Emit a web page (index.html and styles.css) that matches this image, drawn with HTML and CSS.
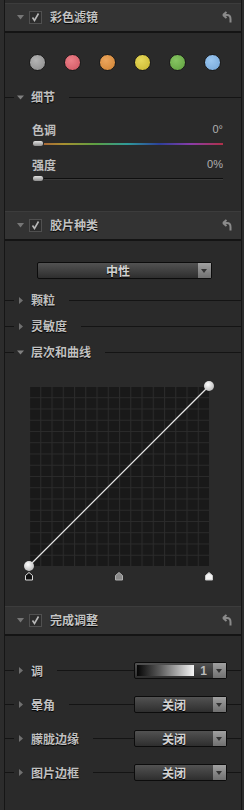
FILE: index.html
```html
<!DOCTYPE html>
<html lang="zh-CN">
<head>
    <meta charset="UTF-8">
    <title>调整面板</title>
    <link rel="stylesheet" href="styles.css">
</head>
<body>
    <div class="panel">
        <!-- 彩色滤镜 -->
        <div class="header">
            <svg class="tri" width="7" height="5" viewBox="0 0 7 5"><polygon points="0,0 7,0 3.5,4.5" fill="#767676"/></svg>
            <span class="check"><svg width="11" height="11" viewBox="0 0 11 11"><path d="M2.5 5.5 L4.5 8.5 L8.5 1.5" fill="none" stroke="#b8b8b8" stroke-width="1.6"/></svg></span>
            <span class="title">彩色滤镜</span>
            <svg class="undo" width="10" height="12" viewBox="0 0 10 12"><path d="M1 4 L4.5 1 M1 4 L4.5 7 M1.5 4 H5 C7.5 4 8.5 6 8.5 8 V11.5" fill="none" stroke="#8a8a8a" stroke-width="2"/></svg>
        </div>
        <div class="section s1">
            <div class="swatches">
                <span class="dot gray"></span>
                <span class="dot red"></span>
                <span class="dot orange"></span>
                <span class="dot yellow"></span>
                <span class="dot green"></span>
                <span class="dot blue"></span>
            </div>
            <div class="sub first-sub">
                <span class="lead"></span>
                <svg class="arrow" width="7" height="7" viewBox="0 0 7 7"><polygon points="0,1.5 7,1.5 3.5,5.5" fill="#808080"/></svg>
                <span class="label">细节</span>
                <span class="rule"></span>
            </div>
            <div class="slider">
                <div class="slider-head"><span>色调</span><span class="val">0°</span></div>
                <div class="track hue"><span class="thumb"></span></div>
            </div>
            <div class="slider">
                <div class="slider-head"><span>强度</span><span class="val">0%</span></div>
                <div class="track plain"><span class="thumb"></span></div>
            </div>
        </div>

        <!-- 胶片种类 -->
        <div class="header">
            <svg class="tri" width="7" height="5" viewBox="0 0 7 5"><polygon points="0,0 7,0 3.5,4.5" fill="#767676"/></svg>
            <span class="check"><svg width="11" height="11" viewBox="0 0 11 11"><path d="M2.5 5.5 L4.5 8.5 L8.5 1.5" fill="none" stroke="#b8b8b8" stroke-width="1.6"/></svg></span>
            <span class="title">胶片种类</span>
            <svg class="undo" width="10" height="12" viewBox="0 0 10 12"><path d="M1 4 L4.5 1 M1 4 L4.5 7 M1.5 4 H5 C7.5 4 8.5 6 8.5 8 V11.5" fill="none" stroke="#8a8a8a" stroke-width="2"/></svg>
        </div>
        <div class="section s2">
            <div class="select wide">
                <span class="select-text">中性</span>
                <span class="select-btn"></span>
            </div>
            <div class="sub grain">
                <span class="lead"></span>
                <svg class="arrow" width="7" height="7" viewBox="0 0 7 7"><polygon points="2,0 6,3.5 2,7" fill="#707070"/></svg>
                <span class="label">颗粒</span>
                <span class="rule"></span>
            </div>
            <div class="sub">
                <span class="lead"></span>
                <svg class="arrow" width="7" height="7" viewBox="0 0 7 7"><polygon points="2,0 6,3.5 2,7" fill="#707070"/></svg>
                <span class="label">灵敏度</span>
                <span class="rule"></span>
            </div>
            <div class="sub">
                <span class="lead"></span>
                <svg class="arrow" width="7" height="7" viewBox="0 0 7 7"><polygon points="0,1.5 7,1.5 3.5,5.5" fill="#808080"/></svg>
                <span class="label">层次和曲线</span>
                <span class="rule"></span>
            </div>
            <svg class="curve" width="192" height="202" viewBox="0 0 192 202">
                <defs>
                    <pattern id="grid" x="6" y="6" width="11.25" height="11.25" patternUnits="userSpaceOnUse">
                        <rect width="11.25" height="11.25" fill="#191919"/>
                        <path d="M0 0.5 H11.25 M0.5 0 V11.25" stroke="#2b2b2b" stroke-width="1"/>
                    </pattern>
                    <radialGradient id="knob" cx="0.4" cy="0.35" r="0.7">
                        <stop offset="0" stop-color="#ffffff"/>
                        <stop offset="1" stop-color="#b8b8b8"/>
                    </radialGradient>
                </defs>
                <rect x="6" y="6" width="180" height="180" fill="url(#grid)"/>
                <line x1="6" y1="186" x2="186" y2="6" stroke="#e6e6e6" stroke-width="1.2"/>
                <circle cx="6" cy="186" r="5" fill="url(#knob)"/>
                <circle cx="186" cy="6" r="5" fill="url(#knob)"/>
                <polygon points="2.5,200 2.5,195.5 6,192.5 9.5,195.5 9.5,200" fill="#111" stroke="#dcdcdc" stroke-width="1"/>
                <polygon points="92.5,200 92.5,195.5 96,192.5 99.5,195.5 99.5,200" fill="#8a8a8a" stroke="#b0b0b0" stroke-width="1"/>
                <polygon points="182.5,200 182.5,195.5 186,192.5 189.5,195.5 189.5,200" fill="#f2f2f2" stroke="#c8c8c8" stroke-width="1"/>
            </svg>
        </div>

        <!-- 完成调整 -->
        <div class="header">
            <svg class="tri" width="7" height="5" viewBox="0 0 7 5"><polygon points="0,0 7,0 3.5,4.5" fill="#767676"/></svg>
            <span class="check"><svg width="11" height="11" viewBox="0 0 11 11"><path d="M2.5 5.5 L4.5 8.5 L8.5 1.5" fill="none" stroke="#b8b8b8" stroke-width="1.6"/></svg></span>
            <span class="title">完成调整</span>
            <svg class="undo" width="10" height="12" viewBox="0 0 10 12"><path d="M1 4 L4.5 1 M1 4 L4.5 7 M1.5 4 H5 C7.5 4 8.5 6 8.5 8 V11.5" fill="none" stroke="#8a8a8a" stroke-width="2"/></svg>
        </div>
        <div class="section s3">
            <div class="row">
                <span class="lead"></span>
                <svg class="arrow" width="7" height="7" viewBox="0 0 7 7"><polygon points="2,0 6,3.5 2,7" fill="#707070"/></svg>
                <span class="label">调</span>
                <span class="rule"></span>
                <div class="select small">
                    <span class="ramp"></span>
                    <span class="num">1</span>
                    <span class="select-btn"></span>
                </div>
                <span class="tail"></span>
            </div>
            <div class="row">
                <span class="lead"></span>
                <svg class="arrow" width="7" height="7" viewBox="0 0 7 7"><polygon points="2,0 6,3.5 2,7" fill="#707070"/></svg>
                <span class="label">晕角</span>
                <span class="rule"></span>
                <div class="select small">
                    <span class="select-text">关闭</span>
                    <span class="select-btn"></span>
                </div>
                <span class="tail"></span>
            </div>
            <div class="row">
                <span class="lead"></span>
                <svg class="arrow" width="7" height="7" viewBox="0 0 7 7"><polygon points="2,0 6,3.5 2,7" fill="#707070"/></svg>
                <span class="label">朦胧边缘</span>
                <span class="rule"></span>
                <div class="select small">
                    <span class="select-text">关闭</span>
                    <span class="select-btn"></span>
                </div>
                <span class="tail"></span>
            </div>
            <div class="row">
                <span class="lead"></span>
                <svg class="arrow" width="7" height="7" viewBox="0 0 7 7"><polygon points="2,0 6,3.5 2,7" fill="#707070"/></svg>
                <span class="label">图片边框</span>
                <span class="rule"></span>
                <div class="select small">
                    <span class="select-text">关闭</span>
                    <span class="select-btn"></span>
                </div>
                <span class="tail"></span>
            </div>
        </div>
    </div>
</body>
</html>
```

FILE: styles.css
```css
body {
    margin: 0;
    padding: 0;
    background-color: #2c2c2c;
    font-family: "Noto Sans CJK SC", "Noto Sans", sans-serif;
    font-size: 12px;
    font-weight: bold;
    color: #c0c0c0;
}
.panel {
    margin-left: 4px;
    width: 238px;
    height: 810px;
    padding-top: 3px;
    box-sizing: border-box;
    background-color: #2a2a2a;
    border-left: 1px solid #161616;
    border-right: 1px solid #161616;
}
.header {
    display: flex;
    align-items: center;
    height: 28px;
    padding: 0 9px 0 12px;
    background-color: #333;
    border-bottom: 2px solid #141414;
    box-shadow: inset 0 1px 0 #3c3c3c;
}
.header .tri {
    margin-right: 5px;
}
.check {
    display: flex;
    align-items: center;
    justify-content: center;
    width: 11px;
    height: 11px;
    border: 1px solid #505050;
    background-color: #2c2c2c;
    margin-right: 8px;
}
.title {
    flex: 1;
    line-height: 14px;
    color: #c4c4c4;
    text-shadow: 0 1px 1px #000;
}
.section {
    display: flex;
    flex-direction: column;
}
.s1 {
    height: 178px;
}
.s2 {
    height: 365px;
}
.s3 {
    height: 174px;
}
.swatches {
    display: flex;
    gap: 18px;
    padding-left: 24px;
    margin-top: 21px;
}
.dot {
    width: 15px;
    height: 15px;
    border-radius: 50%;
    border: 1px solid #1a1a1a;
}
.gray { background: radial-gradient(circle at 40% 35%, #b4b4b4, #8a8a8a); }
.red { background: radial-gradient(circle at 40% 35%, #ec8088, #cf5561); }
.orange { background: radial-gradient(circle at 40% 35%, #eba55c, #cf8233); }
.yellow { background: radial-gradient(circle at 40% 35%, #e6d85a, #c8b52f); }
.green { background: radial-gradient(circle at 40% 35%, #86c462, #5f9f3e); }
.blue { background: radial-gradient(circle at 40% 35%, #9bc7f0, #74a6d8); }

.sub, .row {
    display: flex;
    align-items: center;
    height: 14px;
}
.row {
    height: 17px;
}
.lead {
    width: 9px;
    height: 1px;
    background-color: #141414;
    margin-right: 3px;
}
.arrow {
    margin-right: 7px;
}
.label {
    line-height: 14px;
    color: #c0c0c0;
    text-shadow: 0 1px 1px #000;
    margin-right: 14px;
}
.rule {
    flex: 1;
    height: 1px;
    background-color: #141414;
}
.first-sub {
    margin-top: 19px;
}
.slider {
    padding: 0 18px 0 27px;
}
.slider-head {
    display: flex;
    justify-content: space-between;
    align-items: center;
    height: 14px;
    margin-top: 18px;
}
.slider + .slider .slider-head {
    margin-top: 10px;
}
.val {
    font-family: "Liberation Sans", Arial, sans-serif;
    font-weight: normal;
    font-size: 11px;
    color: #b0b0b0;
}
.track {
    position: relative;
    height: 2px;
    margin-top: 7px;
    margin-bottom: 2px;
}
.hue {
    background: linear-gradient(90deg, #a8503a, #a89030, #5da043, #2f9a9a, #2c3f9a, #8a3ca8, #b03048);
}
.plain {
    background-color: #0e0e0e;
    border-bottom: 1px solid #3a3a3a;
    height: 1px;
}
.thumb {
    position: absolute;
    left: 0;
    top: -3px;
    width: 10px;
    height: 5px;
    border-radius: 3px;
    border: 1px solid #2a2a2a;
    background: linear-gradient(#e0e0e0, #8c8c8c);
}

.select {
    display: flex;
    align-items: center;
    height: 15px;
    border: 1px solid #0c0c0c;
    border-radius: 2px;
    background: linear-gradient(#525252, #2e2e2e);
    box-sizing: content-box;
}
.select-text {
    flex: 1;
    text-align: center;
    line-height: 15px;
    color: #d2d2d2;
    text-shadow: 0 1px 1px #000;
}
.select-btn {
    position: relative;
    width: 13px;
    height: 15px;
    background: linear-gradient(#a0a0a0, #707070);
}
.select-btn::after {
    content: "";
    position: absolute;
    left: 3px;
    top: 6px;
    border-left: 3.5px solid transparent;
    border-right: 3.5px solid transparent;
    border-top: 4px solid #333;
}
.wide {
    width: 173px;
    margin: 21px 0 0 32px;
}
.grain {
    margin-top: 14px;
}
.s2 .sub + .sub {
    margin-top: 12px;
}
.curve {
    display: block;
    margin: 21px 0 0 18px;
}
.small {
    width: 91px;
}
.tail {
    width: 14px;
    height: 1px;
    background-color: #141414;
}
.ramp {
    width: 57px;
    height: 11px;
    margin-left: 2px;
    background: linear-gradient(90deg, #050505, #5a5a5a 40%, #f4f4f4);
}
.num {
    flex: 1;
    text-align: center;
    font-family: "Liberation Sans", Arial, sans-serif;
    font-size: 12px;
    color: #bbb;
}
.s3 .row {
    margin-top: 17px;
}
.s3 .row:first-child {
    margin-top: 26px;
}
```
